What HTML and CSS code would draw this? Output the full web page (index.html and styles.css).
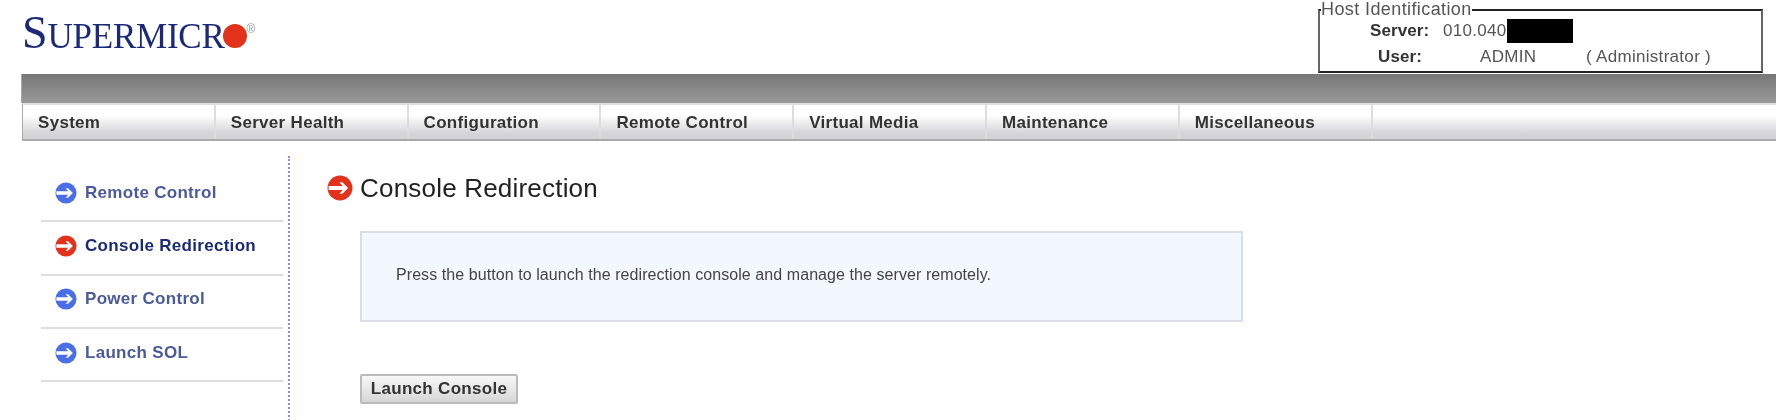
FILE: index.html
```html
<!DOCTYPE html>
<html lang="en">
<head>
    <meta charset="UTF-8">
    <meta name="viewport" content="width=device-width, initial-scale=1.0">
    <title>Console Redirection</title>
    <link rel="stylesheet" href="styles.css">
</head>
<body>
    <svg class="defs" width="0" height="0">
        <symbol id="arrow" viewBox="0 0 24 24">
            <circle cx="12" cy="12" r="11.5" fill="currentColor"/>
            <path d="M1.5 10.2H14.5L11.5 6.8H14.2L19.5 12L14.2 17.2H11.5L14.5 13.8H1.5Z" fill="#fff"/>
        </symbol>
    </svg>
    <div class="header">
        <div class="logo">
            <span class="logo-s">S</span><span class="logo-rest">UPERMICR</span><span class="logo-dot"></span><span class="logo-reg">®</span>
        </div>
        <fieldset class="host">
            <legend>Host Identification</legend>
            <div class="host-row">
                <b class="host-server">Server:</b>
                <span class="host-ip">010.040</span>
                <span class="redacted"></span>
            </div>
            <div class="host-row">
                <b class="host-user">User:</b>
                <span class="host-name">ADMIN</span>
                <span>( Administrator )</span>
            </div>
        </fieldset>
    </div>
    <div class="topbar"></div>
    <div class="nav">
        <a href="#">System</a>
        <a href="#">Server Health</a>
        <a href="#">Configuration</a>
        <a href="#">Remote Control</a>
        <a href="#">Virtual Media</a>
        <a href="#">Maintenance</a>
        <a href="#">Miscellaneous</a>
    </div>
    <div class="main">
        <div class="sidebar">
            <a class="side-item" href="#"><svg class="side-icon"><use href="#arrow"/></svg>Remote Control</a>
            <a class="side-item active" href="#"><svg class="side-icon"><use href="#arrow"/></svg>Console Redirection</a>
            <a class="side-item" href="#"><svg class="side-icon"><use href="#arrow"/></svg>Power Control</a>
            <a class="side-item" href="#"><svg class="side-icon"><use href="#arrow"/></svg>Launch SOL</a>
        </div>
        <div class="content">
            <h1><svg class="title-icon"><use href="#arrow"/></svg>Console Redirection</h1>
            <div class="panel">Press the button to launch the redirection console and manage the server remotely.</div>
            <button>Launch Console</button>
        </div>
    </div>
</body>
</html>
```

FILE: styles.css
```css
html, body {
    height: 420px;
    overflow: hidden;
}
body {
    font-family: "Liberation Sans", Arial, sans-serif;
    margin: 0;
    background-color: #fff;
    color: #222;
    filter: blur(0.7px);
}
a {
    text-decoration: none;
}
.defs {
    display: block;
}
.header {
    height: 74px;
    display: flex;
    justify-content: space-between;
    padding: 0 13px 0 22px;
    box-sizing: border-box;
}
.logo {
    display: flex;
    align-items: baseline;
    height: 52px;
    padding-top: 11px;
    font-family: "Liberation Serif", serif;
    color: #1b2a78;
    line-height: 44px;
}
.logo-s {
    font-size: 46px;
}
.logo-rest {
    font-size: 35px;
    letter-spacing: -0.25px;
}
.logo-dot {
    width: 24px;
    height: 24px;
    border-radius: 50%;
    background-color: #e2321b;
    margin-left: -2px;
}
.logo-reg {
    font-family: "Liberation Sans", sans-serif;
    font-size: 12px;
    line-height: 12px;
    color: #99a;
    align-self: flex-start;
    margin: 12px 0 0 0;
}
.host {
    width: 445px;
    height: 72px;
    box-sizing: border-box;
    margin: 1px 0 0;
    padding: 0;
    border: 2px solid #222;
    border-right-color: #666;
    border-left-color: #666;
    font-size: 17px;
    letter-spacing: 0.3px;
    color: #555;
}
.host legend {
    padding: 0;
    margin-left: 1px;
    font-size: 18px;
    letter-spacing: 0.4px;
    line-height: 17px;
}
.host-row {
    display: flex;
    align-items: center;
    height: 26px;
}
.host-row b {
    color: #333;
    letter-spacing: 0.1px;
}
.host-server {
    margin-left: 50px;
    width: 73px;
}
.redacted {
    width: 66px;
    height: 24px;
    background-color: #000;
    margin-left: 0;
}
.host-user {
    margin-left: 58px;
    width: 102px;
}
.host-name {
    width: 106px;
}
.topbar {
    height: 29px;
    margin-left: 21px;
    background: linear-gradient(#777, #999);
    border-left: 1px solid #aaa;
}
.nav {
    display: flex;
    height: 38px;
    margin-left: 22px;
    border-left: 1px solid #aaa;
    border-top: 2px solid #ddd;
    border-bottom: 2px solid #aaa;
    box-sizing: border-box;
    background: linear-gradient(#fff 30%, #d4d4d7 85%);
}
.nav a {
    width: 192.8px;
    flex-shrink: 0;
    box-sizing: border-box;
    padding-left: 15px;
    line-height: 36px;
    font-size: 17px;
    letter-spacing: 0.3px;
    font-weight: bold;
    color: #333;
    border-right: 2px solid #ddd;
}
.main {
    display: flex;
    padding: 15px 0 0 41px;
}
.sidebar {
    width: 249px;
    height: 265px;
    border-right: 2px dotted #8c8cf5;
    padding-top: 13px;
    box-sizing: border-box;
}
.side-item {
    display: flex;
    align-items: center;
    width: 242px;
    height: 53.3px;
    box-sizing: border-box;
    padding: 0 0 4px 14px;
    border-bottom: 2px solid #ddd;
    font-size: 17px;
    letter-spacing: 0.3px;
    font-weight: bold;
    color: #4a5a9c;
}
.side-icon {
    width: 22px;
    height: 22px;
    margin-right: 8px;
    color: #4a6ee8;
}
.side-item.active {
    color: #1b2a78;
}
.side-item.active .side-icon {
    color: #e2321b;
}
.content {
    padding-left: 37px;
}
h1 {
    display: flex;
    align-items: center;
    margin: 17px 0 0;
    height: 30px;
    font-size: 26px;
    letter-spacing: 0.2px;
    font-weight: normal;
    color: #222;
}
.title-icon {
    width: 26px;
    height: 26px;
    margin-right: 7px;
    color: #e2321b;
}
.panel {
    width: 883px;
    height: 91px;
    margin: 28px 0 0 33px;
    box-sizing: border-box;
    padding: 32px 0 0 34px;
    background-color: #f3f7fe;
    border: 2px solid #d9dde5;
    font-size: 16px;
    letter-spacing: 0.07px;
    line-height: 20px;
    color: #444;
}
button {
    display: block;
    width: 158px;
    height: 30px;
    margin: 52px 0 0 33px;
    padding: 0;
    font-family: inherit;
    font-size: 17px;
    letter-spacing: 0.3px;
    font-weight: bold;
    color: #333;
    background: linear-gradient(#f8f8f8, #d6d6d6);
    border: 2px solid #bbb;
    border-radius: 2px;
}
```
